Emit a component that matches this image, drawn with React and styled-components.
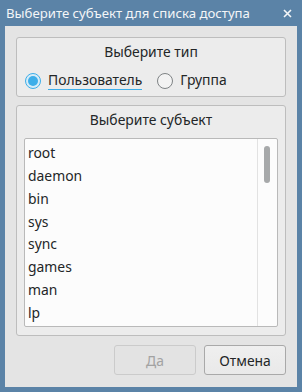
import React, { useState } from 'react'
import styled, { createGlobalStyle } from 'styled-components'

const GlobalStyle = createGlobalStyle`
  html, body {
    margin: 0;
    padding: 0;
    background: #5a82a6;
  }
  * { box-sizing: border-box; }
`

const Window = styled.div`
  width: 302px;
  height: 392px;
  background: #5b83a7;
  display: flex;
  flex-direction: column;
  font-family: "Noto Sans", "Open Sans", sans-serif;
  color: #232627;
`

const TitleBar = styled.div`
  height: 27px;
  display: flex;
  align-items: center;
  justify-content: space-between;
  padding: 0 10px 0 6px;
  color: #f4f6f8;
  font-size: 13.2px;
`

const Body = styled.div`
  flex: 1;
  margin: 0 5px 5px;
  background: #e4e4e4;
  padding: 11px 11px 12px;
  display: flex;
  flex-direction: column;
  gap: 8px;
`

const Group = styled.div`
  border: 1px solid #bdbdbd;
  border-radius: 3px;
  background: #ececec;
  padding: 5px 7px ${p => p.$bottom || 8}px;
  display: flex;
  flex-direction: column;
`

const GroupTitle = styled.div`
  height: 18px;
  line-height: 18px;
  text-align: center;
  font-size: 13.9px;
  margin-bottom: ${p => p.$gap}px;
`

const RadioRow = styled.div`
  display: flex;
  align-items: center;
  padding-left: 1px;
  gap: 15px;
`

const RadioItem = styled.label`
  display: flex;
  align-items: center;
  gap: 7px;
  font-size: 13.9px;
  cursor: pointer;
`

const Circle = styled.span`
  width: 16px;
  height: 16px;
  border-radius: 50%;
  border: 1px solid ${p => (p.$on ? '#3daee9' : '#7f8385')};
  background: ${p => (p.$on ? '#d6ecf8' : '#f3f3f3')};
  display: flex;
  align-items: center;
  justify-content: center;
  &::after {
    content: '';
    width: 10px;
    height: 10px;
    border-radius: 50%;
    background: #3daee9;
    display: ${p => (p.$on ? 'block' : 'none')};
  }
`

const Label = styled.span`
  height: 19px;
  line-height: 18px;
  border-bottom: 1px solid ${p => (p.$focus ? '#3daee9' : 'transparent')};
`

const ListBox = styled.div`
  height: 189px;
  border: 1px solid #b9b9b9;
  border-radius: 2px;
  background: #fcfcfc;
  display: flex;
  overflow: hidden;
`

const Items = styled.div`
  flex: 1;
  padding: 2px 0 0 3px;
`

const Item = styled.div`
  height: 22.85px;
  line-height: 23px;
  font-size: 13.9px;
`

const ScrollTrack = styled.div`
  width: 20px;
  border-left: 1px solid #e2e2e2;
  padding: 7px 0 0 6px;
`

const Thumb = styled.div`
  width: 6px;
  height: 37px;
  border-radius: 3px;
  background: #a7a9aa;
`

const Buttons = styled.div`
  display: flex;
  justify-content: flex-end;
  gap: 8px;
  margin-top: 1px;
`

const Button = styled.button`
  width: 82px;
  height: 30px;
  border-radius: 3px;
  font-family: inherit;
  font-size: 13.9px;
  border: 1px solid ${p => (p.disabled ? '#cbcbcb' : '#a9a9a9')};
  background: ${p => (p.disabled ? '#e3e3e3' : 'linear-gradient(#efefef, #e9e9e9)')};
  color: ${p => (p.disabled ? '#a2a2a2' : '#232627')};
  padding: 0;
`

const users = ['root', 'daemon', 'bin', 'sys', 'sync', 'games', 'man', 'lp']

export default function App() {
  const [kind, setKind] = useState('user')
  return (
    <Window>
      <GlobalStyle />
      <TitleBar>
        <span>Выберите субъект для списка доступа</span>
        <svg width="9" height="9" viewBox="0 0 9 9">
          <path d="M1 1 L8 8 M8 1 L1 8" stroke="#f4f6f8" strokeWidth="1.6" />
        </svg>
      </TitleBar>
      <Body>
        <Group $bottom={6}>
          <GroupTitle $gap={10}>Выберите тип</GroupTitle>
          <RadioRow>
            <RadioItem onClick={() => setKind('user')}>
              <Circle $on={kind === 'user'} />
              <Label $focus>Пользователь</Label>
            </RadioItem>
            <RadioItem onClick={() => setKind('group')}>
              <Circle $on={kind === 'group'} />
              <Label>Группа</Label>
            </RadioItem>
          </RadioRow>
        </Group>
        <Group $bottom={8}>
          <GroupTitle $gap={9}>Выберите субъект</GroupTitle>
          <ListBox>
            <Items>
              {users.map(u => (
                <Item key={u}>{u}</Item>
              ))}
            </Items>
            <ScrollTrack>
              <Thumb />
            </ScrollTrack>
          </ListBox>
        </Group>
        <Buttons>
          <Button disabled>Да</Button>
          <Button>Отмена</Button>
        </Buttons>
      </Body>
    </Window>
  )
}
